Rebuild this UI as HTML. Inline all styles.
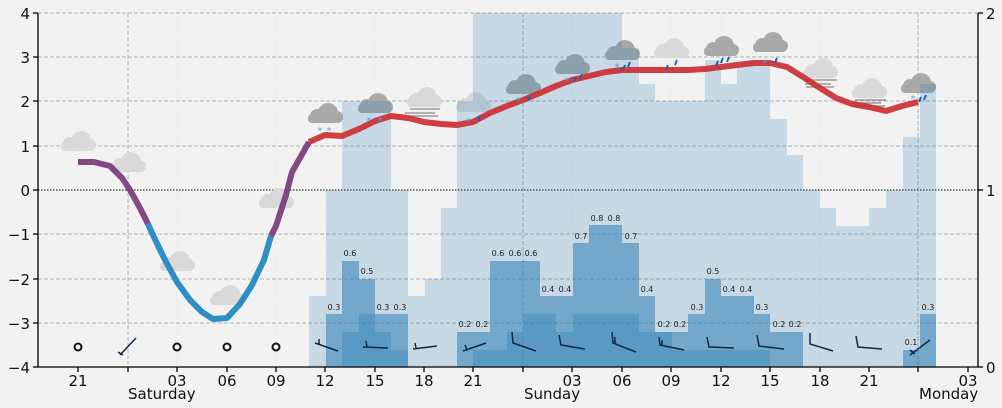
<!DOCTYPE html>
<html><head><meta charset="utf-8"><style>
html,body{margin:0;padding:0;background:#f2f2f2;}
svg{display:block;font-family:"DejaVu Sans","Liberation Sans",sans-serif;}
</style></head><body>
<svg width="1002" height="408" viewBox="0 0 1002 408" xmlns="http://www.w3.org/2000/svg">
<defs>
<g id="cl"><rect x="-17" y="-2" width="34" height="9" rx="4"/><circle cx="-8" cy="0" r="7"/><circle cx="3" cy="-3" r="10"/><circle cx="12" cy="1" r="6"/></g>
</defs>
<rect width="1002" height="408" fill="#f2f2f2"/>
<g stroke="#e6e6e6" stroke-width="1" stroke-dasharray="1,2">
<line x1="78" y1="13" x2="78" y2="367"/><line x1="177" y1="13" x2="177" y2="367"/><line x1="227" y1="13" x2="227" y2="367"/><line x1="276" y1="13" x2="276" y2="367"/><line x1="325" y1="13" x2="325" y2="367"/><line x1="375" y1="13" x2="375" y2="367"/><line x1="424" y1="13" x2="424" y2="367"/><line x1="473" y1="13" x2="473" y2="367"/><line x1="572" y1="13" x2="572" y2="367"/><line x1="622" y1="13" x2="622" y2="367"/><line x1="671" y1="13" x2="671" y2="367"/><line x1="721" y1="13" x2="721" y2="367"/><line x1="770" y1="13" x2="770" y2="367"/><line x1="820" y1="13" x2="820" y2="367"/><line x1="869" y1="13" x2="869" y2="367"/><line x1="968" y1="13" x2="968" y2="367"/>
</g>
<g stroke="#b0b0b0" stroke-width="1" stroke-dasharray="4,2">
<line x1="38" y1="13" x2="978" y2="13"/><line x1="38" y1="57" x2="978" y2="57"/><line x1="38" y1="101" x2="978" y2="101"/><line x1="38" y1="146" x2="978" y2="146"/><line x1="38" y1="234" x2="978" y2="234"/><line x1="38" y1="279" x2="978" y2="279"/><line x1="38" y1="323" x2="978" y2="323"/>
<line x1="128" y1="13" x2="128" y2="367"/><line x1="523" y1="13" x2="523" y2="367"/><line x1="918" y1="13" x2="918" y2="367"/>
</g>
<line x1="38" y1="190" x2="978" y2="190" stroke="#555" stroke-width="1.5" stroke-dasharray="1.5,1.5"/>
<g fill="#d9d9d9">
<use href="#cl" x="78" y="144"/><use href="#cl" x="128" y="165"/><use href="#cl" x="177" y="264"/><use href="#cl" x="227" y="298"/><use href="#cl" x="276" y="201"/><use href="#cl" x="424" y="100"/><use href="#cl" x="473" y="105"/><use href="#cl" x="671" y="51"/><use href="#cl" x="820" y="71"/><use href="#cl" x="869" y="91"/>
</g>
<g fill="#a9a9a9">
<use href="#cl" x="325" y="116"/><use href="#cl" x="375" y="106"/><use href="#cl" x="523" y="87"/><use href="#cl" x="572" y="67"/><use href="#cl" x="622" y="53"/><use href="#cl" x="721" y="49"/><use href="#cl" x="770" y="45"/><use href="#cl" x="918" y="86"/>
</g>
<g stroke="#999" stroke-width="1.5">
<line x1="410" y1="109" x2="440" y2="109"/><line x1="405" y1="113" x2="435" y2="113"/><line x1="408" y1="116" x2="438" y2="116"/>
<line x1="806" y1="80" x2="837" y2="80"/><line x1="805" y1="84" x2="831" y2="84"/><line x1="806" y1="87" x2="834" y2="87"/>
<line x1="855" y1="100" x2="886" y2="100"/><line x1="851" y1="103" x2="881" y2="103"/><line x1="854" y1="106" x2="885" y2="106"/>
</g>
<g fill="#1f77b4" fill-opacity="0.2">
<rect x="309" y="296" width="17" height="71"/><rect x="326" y="190" width="16" height="177"/><rect x="342" y="101" width="49" height="266"/><rect x="391" y="190" width="17" height="177"/>
<rect x="408" y="296" width="17" height="71"/><rect x="425" y="279" width="16" height="88"/><rect x="441" y="208" width="16" height="159"/><rect x="457" y="101" width="16" height="266"/>
<rect x="473" y="13" width="149" height="354"/><rect x="622" y="48" width="17" height="319"/><rect x="639" y="84" width="16" height="283"/><rect x="655" y="101" width="50" height="266"/>
<rect x="705" y="60" width="16" height="307"/><rect x="721" y="84" width="16" height="283"/><rect x="737" y="62" width="33" height="305"/><rect x="770" y="119" width="17" height="248"/>
<rect x="787" y="155" width="16" height="212"/><rect x="803" y="190" width="17" height="177"/><rect x="820" y="208" width="16" height="159"/><rect x="836" y="226" width="33" height="141"/>
<rect x="869" y="208" width="17" height="159"/><rect x="886" y="190" width="17" height="177"/><rect x="903" y="137" width="17" height="230"/><rect x="920" y="84" width="16" height="283"/>
</g>
<g fill="#1f77b4" fill-opacity="0.5">
<rect x="326" y="314" width="16" height="53"/><rect x="342" y="261" width="17" height="106"/><rect x="359" y="279" width="16" height="88"/><rect x="375" y="314" width="33" height="53"/>
<rect x="457" y="332" width="33" height="35"/><rect x="490" y="261" width="50" height="106"/><rect x="540" y="296" width="33" height="71"/><rect x="573" y="243" width="16" height="124"/>
<rect x="589" y="225" width="33" height="142"/><rect x="622" y="243" width="17" height="124"/><rect x="639" y="296" width="16" height="71"/><rect x="655" y="332" width="33" height="35"/>
<rect x="688" y="314" width="17" height="53"/><rect x="705" y="279" width="16" height="88"/><rect x="721" y="296" width="33" height="71"/><rect x="754" y="314" width="16" height="53"/>
<rect x="770" y="332" width="33" height="35"/><rect x="903" y="350" width="17" height="17"/><rect x="920" y="314" width="16" height="53"/>
</g>
<g fill="#1f77b4" fill-opacity="0.3">
<rect x="342" y="332" width="17" height="35"/><rect x="359" y="314" width="16" height="53"/><rect x="375" y="332" width="16" height="35"/><rect x="391" y="350" width="17" height="17"/>
<rect x="473" y="350" width="34" height="17"/><rect x="507" y="332" width="16" height="35"/><rect x="523" y="314" width="33" height="53"/><rect x="556" y="332" width="17" height="35"/>
<rect x="573" y="314" width="66" height="53"/><rect x="639" y="332" width="33" height="35"/><rect x="672" y="350" width="98" height="17"/>
</g>
<g font-size="8" fill="#222" text-anchor="middle">
<text x="334" y="310">0.3</text><text x="350" y="256">0.6</text><text x="367" y="274">0.5</text><text x="383" y="310">0.3</text><text x="400" y="310">0.3</text>
<text x="465" y="327">0.2</text><text x="482" y="327">0.2</text><text x="498" y="256">0.6</text><text x="515" y="256">0.6</text><text x="531" y="256">0.6</text>
<text x="548" y="292">0.4</text><text x="565" y="292">0.4</text><text x="581" y="239">0.7</text><text x="597" y="221">0.8</text><text x="614" y="221">0.8</text>
<text x="631" y="239">0.7</text><text x="647" y="292">0.4</text><text x="664" y="327">0.2</text><text x="680" y="327">0.2</text><text x="697" y="310">0.3</text>
<text x="713" y="274">0.5</text><text x="729" y="292">0.4</text><text x="746" y="292">0.4</text><text x="762" y="310">0.3</text><text x="779" y="327">0.2</text>
<text x="795" y="327">0.2</text><text x="911" y="345">0.1</text><text x="928" y="310">0.3</text>
</g>
<g fill="none" stroke-width="6" stroke-linejoin="round" stroke-opacity="0.92">
<polyline stroke="#7a3b7b" points="78,162 94,162 110,166 122,178 130,190 140,208 148,224"/>
<polyline stroke="#1b88c2" points="148,224 152,233 165,260 177,282 190,300 202,312 213,319 227,318 240,304 252,285 264,260 271,236"/>
<polyline stroke="#7a3b7b" points="271,236 276,226 286,195 292,172 300,158 309,142"/>
<polyline stroke="#cc2f33" points="309,142 325,135 342,136 359,129 375,121 391,116 408,118 424,122 441,124 457,125 473,122 490,113 507,106 523,100 540,93 556,86 572,80 589,76 606,72 622,70 639,70 655,70 688,70 705,69 721,67 737,65 754,63 770,63 787,67 803,77 820,88 836,98 852,104 869,107 886,111 902,106 918,102"/>
</g>
<g fill="#3ab0e6" font-size="10" text-anchor="middle">
<text x="320" y="134">*</text><text x="329" y="134">*</text><text x="369" y="124">*</text><text x="380" y="124">*</text><text x="468" y="125">*</text><text x="518" y="104">*</text><text x="567" y="84">*</text><text x="617" y="70">*</text><text x="765" y="66">*</text><text x="913" y="102">*</text>
</g>
<g stroke="#1a63b8" stroke-width="2">
<line x1="478" y1="121" x2="480" y2="116"/><line x1="528" y1="101" x2="530" y2="96"/><line x1="574" y1="82" x2="576" y2="77"/><line x1="580" y1="79" x2="582" y2="74"/>
<line x1="623" y1="70" x2="625" y2="65"/><line x1="628" y1="67" x2="630" y2="62"/><line x1="666" y1="70" x2="668" y2="65"/><line x1="675" y1="65" x2="677" y2="60"/>
<line x1="716" y1="66" x2="718" y2="61"/><line x1="721" y1="63" x2="723" y2="58"/><line x1="727" y1="62" x2="729" y2="57"/><line x1="775" y1="63" x2="777" y2="58"/>
<line x1="919" y1="102" x2="921" y2="97"/><line x1="924" y1="100" x2="926" y2="95"/>
</g>
<g fill="none" stroke="#111" stroke-width="2">
<circle cx="78" cy="347" r="3.5"/><circle cx="177" cy="347" r="3.5"/><circle cx="227" cy="347" r="3.5"/><circle cx="276" cy="347" r="3.5"/>
</g>
<g fill="none" stroke="#0d2a44" stroke-width="1.5">
<path d="M120,355 L136,338 M118,352 L123,355"/>
<path d="M315,343 L338,351 M319,339 L319,345"/>
<path d="M363,347 L388,348 M366,341 L367,347"/>
<path d="M413,349 L437,346 M415,343 L416,348"/>
<path d="M463,351 L486,343 M465,345 L467,350"/>
<path d="M512,332 L513,343 L536,351"/>
<path d="M559,335 L561,345 L585,349"/>
<path d="M612,332 L613,343 L636,352 M615,337 L615,343"/>
<path d="M659,337 L660,345 L684,350 M662,340 L662,345"/>
<path d="M707,337 L709,347 L734,348"/>
<path d="M757,335 L759,346 L784,349"/>
<path d="M810,333 L810,344 L833,351"/>
<path d="M856,336 L858,347 L882,349"/>
<path d="M910,355 L930,340 M910,350 L915,354"/>
</g>
<g stroke="#000" stroke-width="1.3">
<line x1="38" y1="13" x2="38" y2="367"/><line x1="38" y1="367" x2="978" y2="367"/><line x1="978" y1="13" x2="978" y2="367"/>
<line x1="33" y1="13" x2="38" y2="13"/><line x1="33" y1="57" x2="38" y2="57"/><line x1="33" y1="101" x2="38" y2="101"/><line x1="33" y1="146" x2="38" y2="146"/><line x1="33" y1="190" x2="38" y2="190"/><line x1="33" y1="234" x2="38" y2="234"/><line x1="33" y1="279" x2="38" y2="279"/><line x1="33" y1="323" x2="38" y2="323"/><line x1="33" y1="367" x2="38" y2="367"/>
<line x1="978" y1="13" x2="983" y2="13"/><line x1="978" y1="190" x2="983" y2="190"/><line x1="978" y1="367" x2="983" y2="367"/>
<line x1="78" y1="367" x2="78" y2="372"/><line x1="128" y1="367" x2="128" y2="372"/><line x1="177" y1="367" x2="177" y2="372"/><line x1="227" y1="367" x2="227" y2="372"/><line x1="276" y1="367" x2="276" y2="372"/><line x1="325" y1="367" x2="325" y2="372"/><line x1="375" y1="367" x2="375" y2="372"/><line x1="424" y1="367" x2="424" y2="372"/><line x1="473" y1="367" x2="473" y2="372"/><line x1="523" y1="367" x2="523" y2="372"/><line x1="572" y1="367" x2="572" y2="372"/><line x1="622" y1="367" x2="622" y2="372"/><line x1="671" y1="367" x2="671" y2="372"/><line x1="721" y1="367" x2="721" y2="372"/><line x1="770" y1="367" x2="770" y2="372"/><line x1="820" y1="367" x2="820" y2="372"/><line x1="869" y1="367" x2="869" y2="372"/><line x1="918" y1="367" x2="918" y2="372"/><line x1="968" y1="367" x2="968" y2="372"/>
</g>
<g font-size="15" fill="#111">
<g text-anchor="end">
<text x="30" y="19">4</text><text x="30" y="63">3</text><text x="30" y="107">2</text><text x="30" y="152">1</text><text x="30" y="196">0</text><text x="30" y="240">−1</text><text x="30" y="285">−2</text><text x="30" y="329">−3</text><text x="30" y="373">−4</text>
</g>
<text x="986" y="19">2</text><text x="986" y="196">1</text><text x="986" y="373">0</text>
<g text-anchor="middle">
<text x="78" y="386">21</text><text x="177" y="386">03</text><text x="227" y="386">06</text><text x="276" y="386">09</text><text x="325" y="386">12</text><text x="375" y="386">15</text><text x="424" y="386">18</text><text x="473" y="386">21</text><text x="572" y="386">03</text><text x="622" y="386">06</text><text x="671" y="386">09</text><text x="721" y="386">12</text><text x="770" y="386">15</text><text x="820" y="386">18</text><text x="869" y="386">21</text><text x="968" y="386">03</text>
</g>
<text x="128" y="399">Saturday</text><text x="524" y="399">Sunday</text><text x="919" y="399">Monday</text>
</g>
</svg>
</body></html>
